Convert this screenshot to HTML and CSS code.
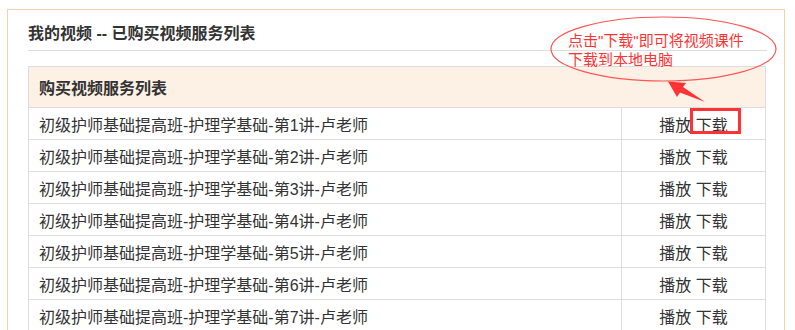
FILE: index.html
```html
<!DOCTYPE html>
<html lang="zh-CN">

<head>
    <meta charset="UTF-8">
    <meta name="viewport" content="width=device-width, initial-scale=1.0">
    <title>我的视频</title>
    <link rel="stylesheet" href="styles.css">
</head>

<body>
    <div class="panel">
        <h2 class="panel-title">我的视频 -- 已购买视频服务列表</h2>

        <table class="video-list">
            <thead>
                <tr>
                    <th colspan="2">购买视频服务列表</th>
                </tr>
            </thead>
            <tbody>
                <tr>
                    <td class="name">初级护师基础提高班-护理学基础-第1讲-卢老师</td>
                    <td class="ops"><a href="#">播放</a> <a href="#">下载</a></td>
                </tr>
                <tr>
                    <td class="name">初级护师基础提高班-护理学基础-第2讲-卢老师</td>
                    <td class="ops"><a href="#">播放</a> <a href="#">下载</a></td>
                </tr>
                <tr>
                    <td class="name">初级护师基础提高班-护理学基础-第3讲-卢老师</td>
                    <td class="ops"><a href="#">播放</a> <a href="#">下载</a></td>
                </tr>
                <tr>
                    <td class="name">初级护师基础提高班-护理学基础-第4讲-卢老师</td>
                    <td class="ops"><a href="#">播放</a> <a href="#">下载</a></td>
                </tr>
                <tr>
                    <td class="name">初级护师基础提高班-护理学基础-第5讲-卢老师</td>
                    <td class="ops"><a href="#">播放</a> <a href="#">下载</a></td>
                </tr>
                <tr>
                    <td class="name">初级护师基础提高班-护理学基础-第6讲-卢老师</td>
                    <td class="ops"><a href="#">播放</a> <a href="#">下载</a></td>
                </tr>
                <tr>
                    <td class="name">初级护师基础提高班-护理学基础-第7讲-卢老师</td>
                    <td class="ops"><a href="#">播放</a> <a href="#">下载</a></td>
                </tr>
            </tbody>
        </table>
    </div>

    <!-- annotation drawn over the screenshot -->
    <div class="callout">点击"下载"即可将视频课件<br>下载到本地电脑</div>
    <svg class="callout-arrow" width="795" height="330" viewBox="0 0 795 330">
        <ellipse cx="663.5" cy="49" rx="112.5" ry="32" fill="none" stroke="#f55" stroke-width="1.2"/>
        <polygon points="668,81.5 686,83 683,87 705,102 680,92.5 677,97" fill="#f33"/>
    </svg>
    <div class="mark-box"></div>
</body>

</html>
```

FILE: styles.css
```css
* {
    margin: 0;
    padding: 0;
    box-sizing: border-box;
}

body {
    font-family: "Liberation Sans", "Noto Sans CJK SC", sans-serif;
    color: #333;
    background-color: #fff;
    position: relative;
    height: 330px;
    overflow: hidden;
}

/* outer panel */
.panel {
    margin: 9px 0 0 7px;
    width: 778px;
    height: 340px;
    border: 1px solid #f5d2ab;
    border-bottom: none;
    padding: 0 17px 0 20px;
}

.panel-title {
    font-size: 16px;
    font-weight: bold;
    line-height: 24px;
    padding-top: 12px;
    padding-bottom: 4px;
    border-bottom: 1px solid #ddd;
    color: #333;
}

/* video table */
.video-list {
    margin-top: 15px;
    width: 738px;
    border-collapse: collapse;
    font-size: 16px;
}

.video-list th {
    background-color: #fdf0e4;
    text-align: left;
    font-size: 16px;
    font-weight: bold;
    height: 41px;
    padding: 0 10px;
    border: 1px solid #ddd;
}

.video-list td {
    height: 32px;
    border: 1px solid #ddd;
    padding: 0 10px;
}

.video-list td.name {
    width: 593px;
}

.video-list td.ops {
    text-align: center;
    padding: 0;
}

.video-list a {
    color: #333;
    text-decoration: none;
}

/* red annotation */
.callout {
    position: absolute;
    left: 568px;
    top: 31px;
    font-size: 15px;
    line-height: 19px;
    color: #f33;
    white-space: nowrap;
}

.callout-arrow {
    position: absolute;
    left: 0;
    top: 0;
    pointer-events: none;
}

.mark-box {
    position: absolute;
    left: 690px;
    top: 108px;
    width: 51px;
    height: 26px;
    border: 3px solid #f33;
}
```
